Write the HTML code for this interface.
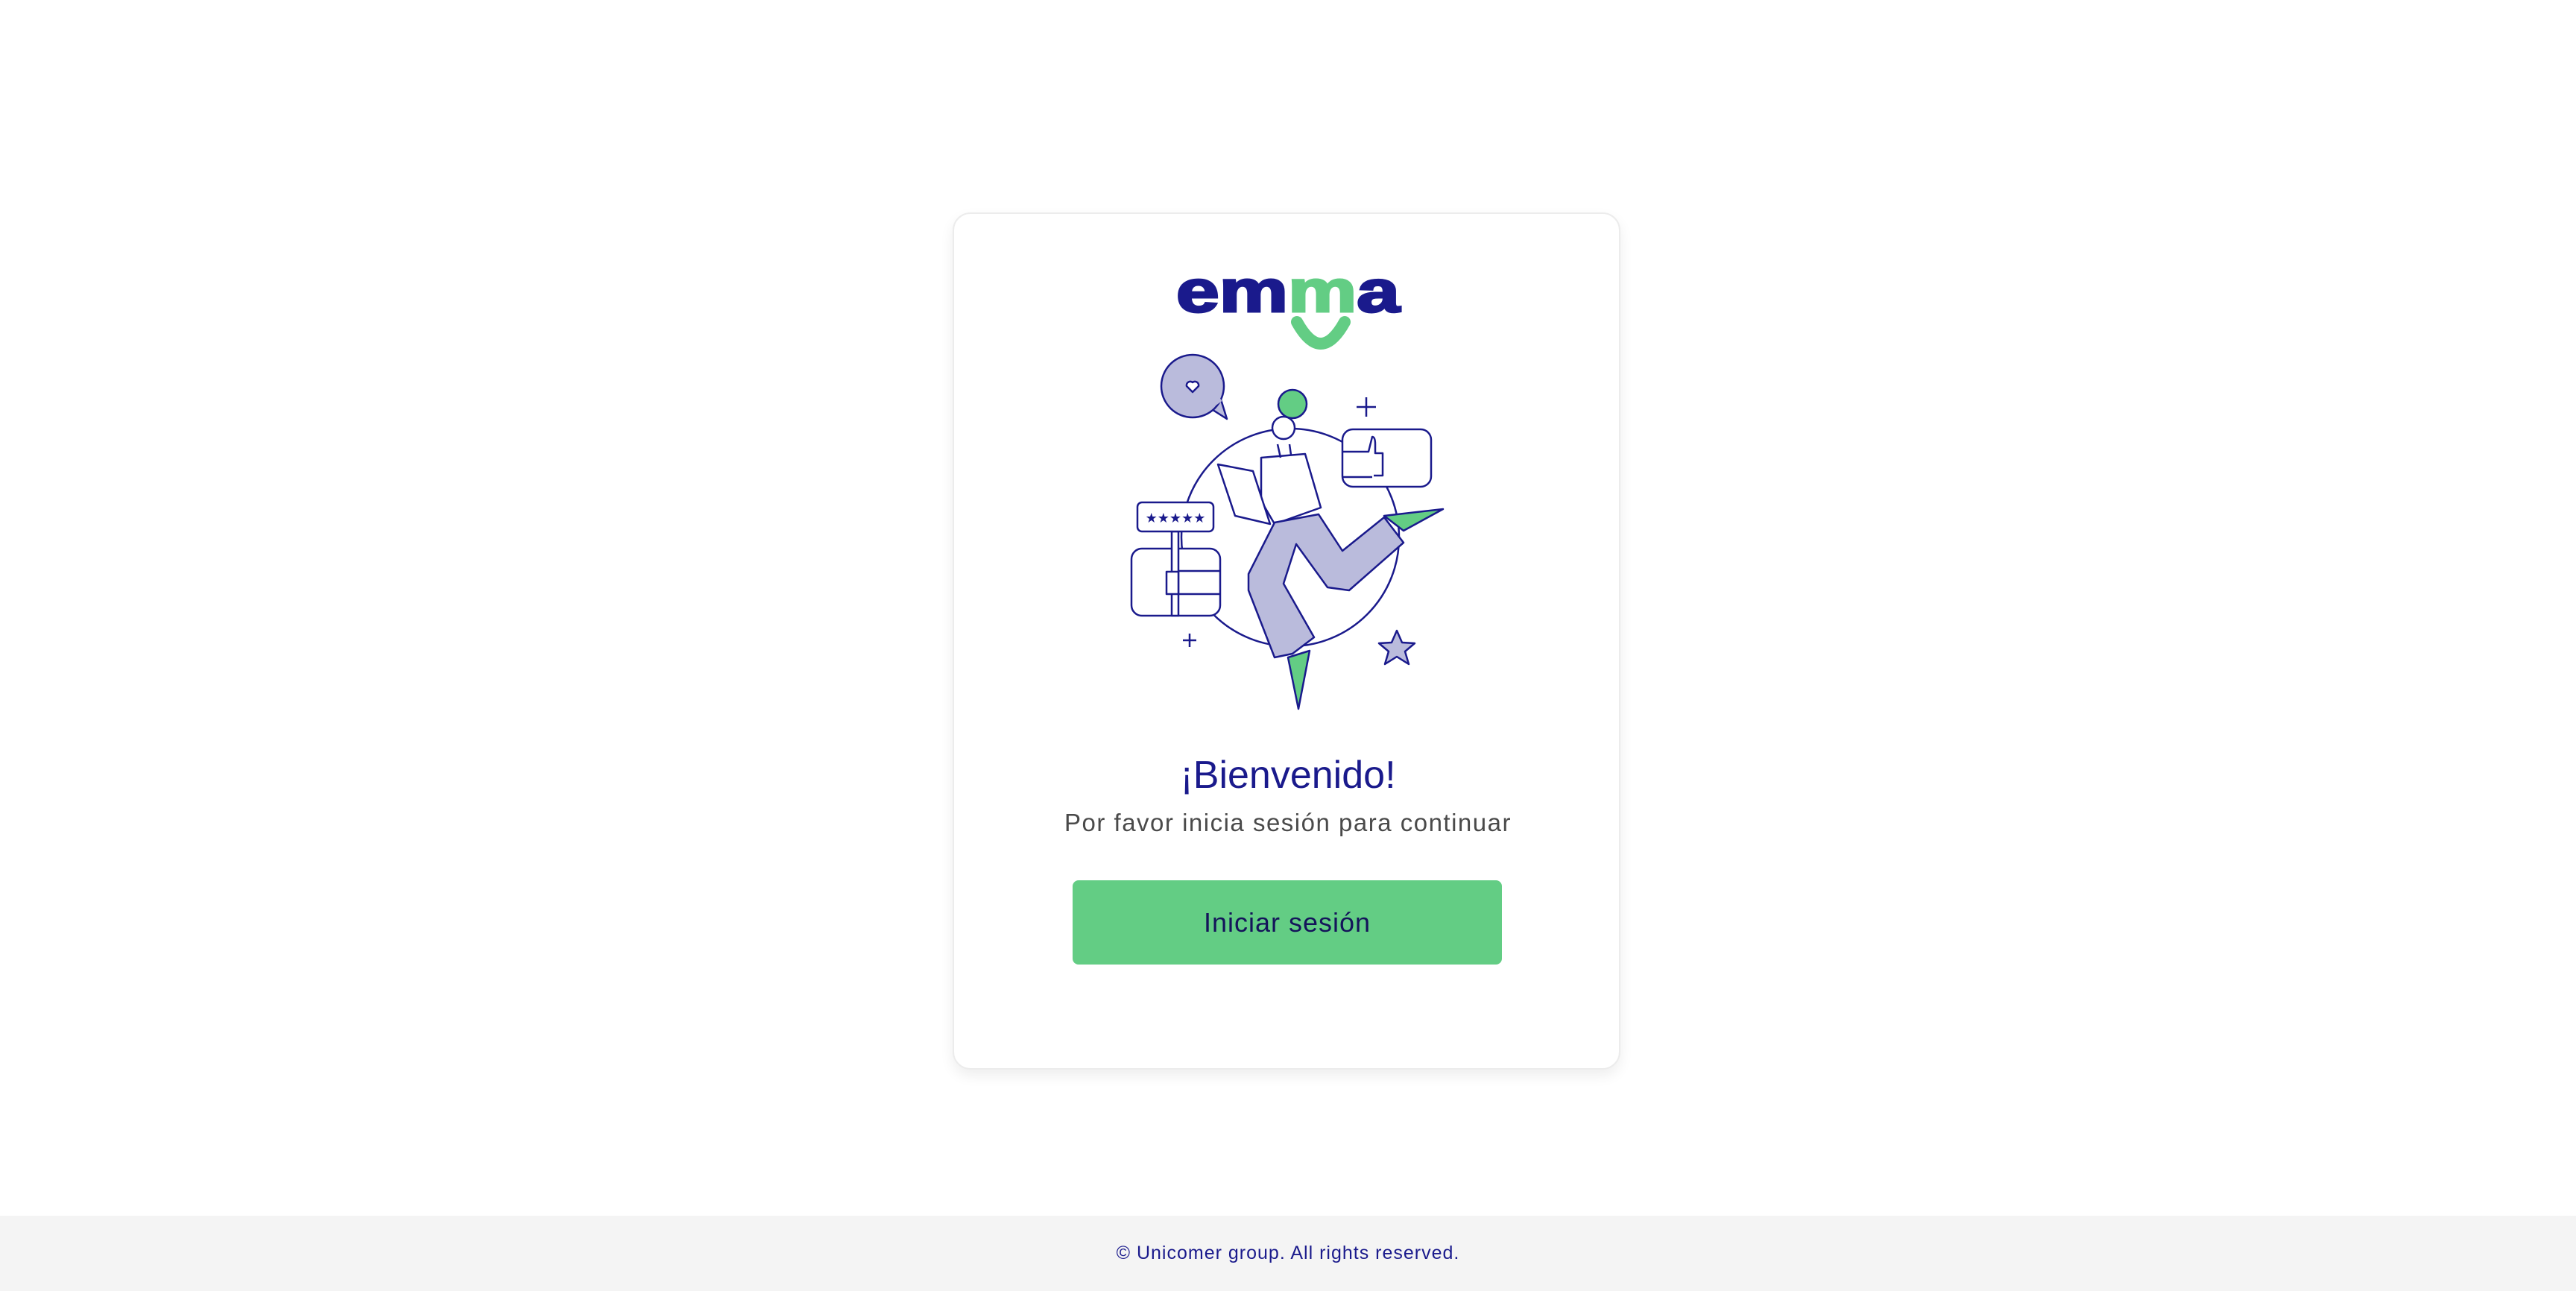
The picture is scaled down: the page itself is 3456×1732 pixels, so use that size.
<!DOCTYPE html>
<html><head><meta charset="utf-8"><style>
html,body{margin:0;padding:0;width:3456px;height:1732px;background:#fff;overflow:hidden;font-family:"Liberation Sans",sans-serif}
.card{position:absolute;left:1278px;top:285px;width:896px;height:1150px;border:2px solid #ececec;border-radius:24px;box-shadow:0 8px 18px rgba(0,0,0,0.07);background:#fff;box-sizing:border-box}
.t{position:absolute;left:0;width:3456px;text-align:center}
.btn{position:absolute;left:1439px;top:1181px;width:576px;height:113px;background:#63cd84;border-radius:8px;color:#14145a;font-size:36px;line-height:113px;text-align:center;letter-spacing:1px}
.foot{position:absolute;left:0;top:1631px;width:3456px;height:101px;background:#f4f4f4;color:#1a1a8c;font-size:25px;line-height:101px;text-align:center;letter-spacing:1px}
</style></head><body>
<div class="card"></div>
<svg style="position:absolute;left:0;top:0" width="3456" height="1732" viewBox="0 0 3456 1732">
<text x="1578" y="418" font-family="Liberation Sans" font-weight="bold" font-size="80" textLength="300" lengthAdjust="spacingAndGlyphs" fill="#1a1a8c" stroke="#1a1a8c" stroke-width="3">em<tspan fill="#63cd84" stroke="#63cd84">m</tspan>a</text>
<path d="M1740 432 Q1772 490 1804 432" stroke="#63cd84" stroke-width="16" fill="none" stroke-linecap="round"/>
<g stroke="#1a1a8c" stroke-width="2.5" stroke-linejoin="round">
<circle cx="1731" cy="721" r="146" fill="none"/>
<path d="M1624 548 L1646 562 1638 536z" fill="#babbdc"/>
<circle cx="1600" cy="518" r="42" fill="#babbdc"/>
<path d="M1624 546 L1638 536" stroke="#babbdc" stroke-width="5"/>
<path d="M1600 526 l-8 -8 a5 5 0 0 1 8 -5 a5 5 0 0 1 8 5z" fill="#fff"/>
<circle cx="1734" cy="542" r="19" fill="#63cd84"/>
<rect x="1801" y="576" width="119" height="77" rx="14" fill="#fff"/>
<path d="M1801 606 h35 l5 -20 q4 0 4 10 v12 h10 v30 h-12 M1801 640 h40" fill="none"/>
<rect x="1518" y="736" width="119" height="90" rx="14" fill="#fff"/>
<rect x="1572" y="713" width="9" height="113" fill="#fff"/>
<rect x="1526" y="674" width="102" height="39" rx="6" fill="#fff"/>
<text x="1577" y="701" text-anchor="middle" font-size="18" fill="#1a1a8c" stroke="none">★★★★★</text>
<path d="M1581 766 h56 M1581 797 h56 M1565 767 h16 v30 h-16z" fill="#fff"/>
<path d="M1833 533 v26 M1820 546 h26 M1596 850 v18 M1587 859 h18" fill="none"/>
<path d="M1874 846 l7 16 17 1 -13 11 5 17 -16 -10 -16 10 5 -17 -13 -11 17 -1z" fill="#babbdc"/>
<path d="M1692 614 L1751 609 1772 681 1710 703 1692 672z" fill="#fff"/>
<path d="M1634 623 L1681 632 1704 703 1657 692z" fill="#fff"/>
<path d="M1710 701 L1769 690 1801 739 1857 694 1883 728 1810 792 1781 788 1739 730 1722 783 1763 855 1734 877 1710 882 1675 792 1675 770z" fill="#babbdc"/>
<path d="M1857 692 L1936 683 1883 712z" fill="#63cd84"/>
<path d="M1728 882 L1757 873 1742 951z" fill="#63cd84"/>
<circle cx="1722" cy="574" r="15" fill="#fff"/>
<path d="M1714 596 l4 18 M1730 596 l2 14" fill="none"/>
</g>
</svg>
<div class="t" style="top:1010px;font-size:52px;color:#1a1a8c;line-height:60px">¡Bienvenido!</div>
<div class="t" style="top:1083px;font-size:33px;color:#4a4a4a;line-height:42px;letter-spacing:1.5px">Por favor inicia sesión para continuar</div>
<div class="btn">Iniciar sesión</div>
<div class="foot">© Unicomer group. All rights reserved.</div>
</body></html>
